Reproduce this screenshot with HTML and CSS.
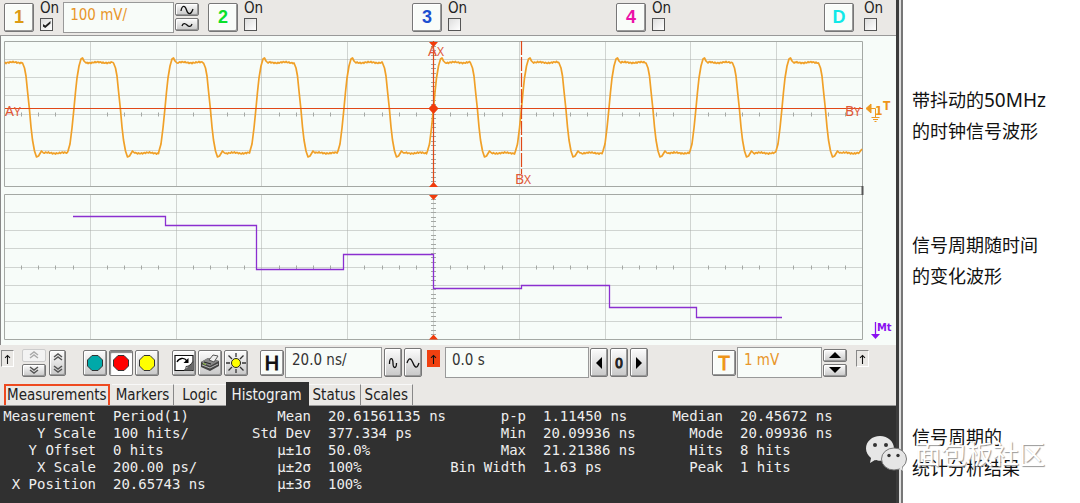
FILE: index.html
```html
<!DOCTYPE html>
<html lang="zh-CN">
<head>
<meta charset="utf-8">
<title>Oscilloscope</title>
<link rel="stylesheet" href="styles.css">
</head>
<body>
<div class="page">
<main class="scope">
  <div class="channels">
    <div class="channel">
      <button class="key key-ch ch1">1</button>
      <label class="on">On<input type="checkbox" checked></label>
      <input class="field field-scale" type="text" value="100 mV/" aria-label="Channel 1 scale">
      <div class="stack">
        <button class="key key-flat" aria-label="Larger scale"><svg width="16" height="10" viewBox="0 0 16 10"><path class="ink" d="M2 6C3 0 6 0 7.500 5S12 10 14 4"/></svg></button>
        <button class="key key-flat" aria-label="Smaller scale"><svg width="16" height="10" viewBox="0 0 16 10"><path class="ink" d="M3 6C4 3 6 3 8 5S12 7 13 4"/></svg></button>
      </div>
    </div>
    <div class="channel">
      <button class="key key-ch ch2">2</button>
      <label class="on">On<input type="checkbox"></label>
    </div>
    <div class="channel">
      <button class="key key-ch ch3">3</button>
      <label class="on">On<input type="checkbox"></label>
    </div>
    <div class="channel">
      <button class="key key-ch ch4">4</button>
      <label class="on">On<input type="checkbox"></label>
    </div>
    <div class="channel channel-digital">
      <button class="key key-ch chd">D</button>
      <label class="on">On<input type="checkbox"></label>
    </div>
  </div>

  <svg class="plot" viewBox="1 36 895 309" role="img" aria-label="Waveforms">
    <g id="grid"></g>
    <path d="M862.500 186v9" stroke="#555" stroke-width="2"/>
    <path id="clock" class="trace-clock"/>
    <path class="trace-period" d="M73 216.500H165.500V225.500H256.500V269.500H343.500V254.500H433.500V288.500H521.500V285.500H609.500V307.500H696.500V317.500H782"/>
    <g class="cursor">
      <path d="M5 108.500H863M433.500 41V187"/>
      <path d="M521.500 41V174" stroke-dasharray="14 2"/>
      <path class="fill" d="M429 42h9l-4.500 5zM429 187h9l-4.500-5zM429 195h9l-4.500 5zM429 339.500h9l-4.500-5zM433.500 103l5 5.500-5 5.500-5-5.500z"/>
      <text x="428" y="56">A<tspan class="sub">X</tspan></text>
      <text x="515" y="184">B<tspan class="sub">X</tspan></text>
      <text x="5" y="116">A<tspan class="sub">Y</tspan></text>
      <text x="845" y="116">B<tspan class="sub">Y</tspan></text>
    </g>
    <g class="ground">
      <path class="fill" d="M866 108.500l5-4.500v9z"/>
      <path d="M870 108.500H875.500V117M871.500 117.500h8M873 119.500h5M874.500 121.500h2"/>
      <text x="875" y="115">1</text>
      <text x="883" y="110">T</text>
    </g>
    <g class="math">
      <path d="M875.500 322V335"/>
      <path class="fill" d="M871 334h9l-4.500 5z"/>
      <text x="877" y="331">Mt</text>
    </g>
  </svg>

  <div class="controls">
    <span class="edge" aria-label="Rising edge"><svg width="11" height="15" viewBox="0 0 11 15"><path class="ink" d="M5.500 13V2.500M2.500 5.500l3-3 3 3"/></svg></span>
    <div class="stack">
      <button class="key key-flat key-off" aria-label="Up"><svg width="12" height="10" viewBox="0 0 12 10"><path class="soft" d="M2 5l4-3 4 3M2 8l4-3 4 3"/></svg></button>
      <button class="key key-flat" aria-label="Down"><svg width="12" height="10" viewBox="0 0 12 10"><path class="soft dark" d="M2 2l4 3 4-3M2 5l4 3 4-3"/></svg></button>
    </div>
    <button class="key key-tall" aria-label="Move"><svg width="12" height="22" viewBox="0 0 12 22"><path class="soft dark" d="M2 5l4-3 4 3M2 8l4-3 4 3M2 14l4 3 4-3M2 17l4 3 4-3"/></svg></button>

    <div class="group group-run">
      <button class="key key-icon" aria-label="Run"><svg width="18" height="18" viewBox="0 0 18 18"><path class="oct" fill="#00a9a9" d="M6 1.500h6l4.500 4.500v6L12 16.500H6L1.500 12V6z"/></svg></button>
      <button class="key key-icon key-down" aria-label="Stop"><svg width="18" height="18" viewBox="0 0 18 18"><path class="oct" fill="#f00" d="M6 1.500h6l4.500 4.500v6L12 16.500H6L1.500 12V6z"/></svg></button>
      <button class="key key-icon" aria-label="Single"><svg width="18" height="18" viewBox="0 0 18 18"><path class="oct" fill="#ff0" d="M6 1.500h6l4.500 4.500v6L12 16.500H6L1.500 12V6z"/></svg></button>
    </div>
    <div class="group group-tools">
      <button class="key key-icon" aria-label="Clear display"><svg width="20" height="20" viewBox="0 0 20 20"><path d="M1 2.500h18v15H1z" fill="#fff" stroke="#111" stroke-width="1.200"/><path d="M18.500 9v8.500H10z" fill="#666"/><path d="M10 17.500c2-1 2-3 2-4 3 0 5-2 7-5" fill="#fff" stroke="#333"/><path d="M3 9c2-4 7-5 10-1" fill="none" stroke="#000" stroke-width="1.300"/><path d="M14.500 5v5H9.500z"/></svg></button>
      <button class="key key-icon" aria-label="Print"><svg width="20" height="20" viewBox="0 0 20 20"><path d="M1 9l7-4 11 3v5l-9 5-9-4z" fill="#444"/><path d="M1 9l7-4 11 3-9 5z" fill="#888"/><path d="M9 7l4-5 5 1-4 6z" fill="#eee" stroke="#555"/><path d="M2 12l8 3 8-4" fill="none" stroke="#bbb"/><path d="M4 9l7 2" stroke="#222"/><path d="M3 10.500l3 1" stroke="#9c4"/></svg></button>
      <button class="key key-icon" aria-label="Brightness"><svg width="20" height="20" viewBox="0 0 20 20"><path d="M10 0v4M10 16v4M0 10h4M16 10h4M2.500 2.500l3.500 3.500M14 14l3.500 3.500M17.500 2.500L14 6M6 14l-3.500 3.500" stroke="#333" stroke-width="1.300"/><circle cx="10" cy="10" r="4.500" fill="#ff0" stroke="#222"/></svg></button>
    </div>

    <button class="key key-icon key-letter key-h">H</button>
    <input class="field field-time" type="text" value="20.0 ns/" aria-label="Time scale">
    <div class="group group-tight">
      <button class="key key-slim" aria-label="Zoom in time"><svg width="10" height="16" viewBox="0 0 10 16"><path class="ink" d="M1.500 9C1.500 2 5 2 5 8s3.500 6 3.500 0"/></svg></button>
      <button class="key key-slim" aria-label="Zoom out time"><svg width="14" height="16" viewBox="0 0 14 16"><path class="ink" d="M1 8C3 2 5 3 7 8s4 6 6 0"/></svg></button>
    </div>
    <span class="edge edge-hot" aria-label="Trigger position"><svg width="11" height="15" viewBox="0 0 11 15"><path class="ink" d="M5.500 13V2.500M2.500 5.500l3-3 3 3"/></svg></span>
    <input class="field field-pos" type="text" value="0.0 s" aria-label="Horizontal position">
    <div class="group group-tight group-nudge">
      <button class="key key-slim" aria-label="Left"><svg width="8" height="12" viewBox="0 0 8 12"><path d="M7 0v12L1 6z"/></svg></button>
      <button class="key key-slim key-zero">0</button>
      <button class="key key-slim" aria-label="Right"><svg width="8" height="12" viewBox="0 0 8 12"><path d="M1 0v12l6-6z"/></svg></button>
    </div>

    <button class="key key-icon key-letter key-t">T</button>
    <input class="field field-level" type="text" value="1 mV" aria-label="Trigger level">
    <div class="stack stack-level">
      <button class="key key-flat" aria-label="Level up"><svg width="12" height="8" viewBox="0 0 12 8"><path d="M0 7h12L6 1z"/></svg></button>
      <button class="key key-flat" aria-label="Level down"><svg width="12" height="8" viewBox="0 0 12 8"><path d="M0 1h12L6 7z"/></svg></button>
    </div>
    <span class="edge edge-last" aria-label="Rising edge"><svg width="11" height="15" viewBox="0 0 11 15"><path class="ink" d="M5.500 13V2.500M2.500 5.500l3-3 3 3"/></svg></span>
  </div>

  <div class="tabs" role="tablist">
    <button class="tab tab-marked" role="tab">Measurements</button>
    <button class="tab" role="tab">Markers</button>
    <button class="tab tab-wide" role="tab">Logic</button>
    <button class="tab tab-active" role="tab" aria-selected="true">Histogram</button>
    <button class="tab" role="tab">Status</button>
    <button class="tab" role="tab">Scales</button>
  </div>

  <div class="readout">
    <table>
      <colgroup><col class="c1"><col class="c2"><col class="c3"><col class="c4"><col class="c5"><col class="c5"><col class="c6"><col></colgroup>
      <tr><th>Measurement</th><td>Period(1)</td><th>Mean</th><td>20.61561135 ns</td><th>p-p</th><td>1.11450 ns</td><th>Median</th><td>20.45672 ns</td></tr>
      <tr><th>Y Scale</th><td>100 hits/</td><th>Std Dev</th><td>377.334 ps</td><th>Min</th><td>20.09936 ns</td><th>Mode</th><td>20.09936 ns</td></tr>
      <tr><th>Y Offset</th><td>0 hits</td><th>μ±1σ</th><td>50.0%</td><th>Max</th><td>21.21386 ns</td><th>Hits</th><td>8 hits</td></tr>
      <tr><th>X Scale</th><td>200.00 ps/</td><th>μ±2σ</th><td>100%</td><th>Bin Width</th><td>1.63 ps</td><th>Peak</th><td>1 hits</td></tr>
      <tr><th>X Position</th><td>20.65743 ns</td><th>μ±3σ</th><td>100%</td><th></th><td></td><th></th><td></td></tr>
    </table>
  </div>
</main>

<aside class="notes">
  <p class="note note-clock">带抖动的<span class="latin">50MHz</span><br>的时钟信号波形</p>
  <p class="note note-period">信号周期随时间<br>的变化波形</p>
  <p class="note note-stats">信号周期的<br>统计分析结果</p>
</aside>

<div class="watermark">
  <svg width="42" height="38" viewBox="0 0 42 38" aria-hidden="true">
    <path d="M15 1C7 1 1 6.500 1 13.500c0 4 2 7 5 9.500l-1 5 5-3c2 .6 3.500.8 5 .8 8 0 14-5.500 14-12.300S23 1 15 1z" fill="#e6e6e6"/>
    <ellipse cx="29" cy="24" rx="12.500" ry="11" fill="#e6e6e6" stroke="#777" stroke-width="1"/>
    <path d="M34 33l4 3-1-5z" fill="#e6e6e6"/>
    <circle cx="10" cy="10" r="2" fill="#333"/><circle cx="21" cy="10" r="2" fill="#333"/>
    <circle cx="24" cy="20.500" r="1.700" fill="#333"/><circle cx="33" cy="20.500" r="1.700" fill="#333"/>
  </svg>
  <span>面包板社区</span>
</div>
</div>
<script src="plot.js"></script>
</body>
</html>
```
FILE: styles.css
```css
* { box-sizing: border-box; }
body { margin: 0; background: #fff; color: #222; font-family: "DejaVu Sans Condensed", "Noto Sans CJK SC", sans-serif; font-size: 15px; }
button, input { font: inherit; color: inherit; margin: 0; }
svg { display: block; }
.page { position: relative; display: grid; grid-template-columns: 899fr 179fr; column-gap: 2px; min-height: 100vh; background: #dedede; }
.scope { display: flex; flex-direction: column; min-width: 0; background: #eae8e5; border-right: 3px solid #3c3c3c; }

.channels { display: grid; grid-template-columns: 204fr 204fr 204fr 208fr 72fr; padding: 1px 0 3px 4px; border-bottom: 1px solid #999; height: 36px; }
.channel { display: flex; align-items: flex-start; gap: 6px; }
.channel-digital { gap: 10px; }
.on { display: flex; flex-direction: column; line-height: 15px; gap: 2px; font-size: 15px; }
.on input { appearance: none; width: 13px; height: 13px; border: 1px solid #555; background: linear-gradient(135deg, #ddd, #fff); display: grid; place-items: center; }
.on input:checked::after { content: ""; width: 8px; height: 7px; background: #222; clip-path: polygon(0 40%, 35% 65%, 100% 0, 100% 35%, 35% 100%, 0 75%); }

.key { display: flex; align-items: center; justify-content: center; flex: none; padding: 0; border: 1px solid #777; border-radius: 2px; background: linear-gradient(#fcfcfc, #c8c8c8); box-shadow: inset -1px -1px 0 #999, inset 1px 1px 0 #fff; }
.key-ch { width: 30px; height: 29px; margin-top: 2px; background: #f9fcf9; font: bold 18px "Liberation Sans", sans-serif; }
.ch1 { color: #dc9a14; }
.ch2 { color: #0ae02a; }
.ch3 { color: #1c4fd0; }
.ch4 { color: #ec10a8; }
.chd { color: #10e8e8; }
.stack { display: flex; flex-direction: column; gap: 2px; flex: none; }
.channel .stack { margin: 2px 0 0 -5px; }
.key-flat { width: 24px; height: 13px; }
.key-off { border-color: #ccc; background: #f3f3f3; box-shadow: none; }
.key-tall { width: 17px; height: 26px; margin-left: 3px; }
.key-icon { width: 24px; height: 26px; }
.key-down { background: #fff; box-shadow: inset 1px 2px 1px #888; }
.key-slim { width: 18px; height: 29px; }
.key-zero { font: 14px "DejaVu Sans Condensed", sans-serif; -webkit-text-stroke: 1px #222; }
.key-letter { background: #f9fcf9; font: 20px "Noto Sans", sans-serif; line-height: 22px; }
.key-h { margin-left: 12px; color: #111; -webkit-text-stroke: 1px #111; }
.key-t { margin-left: auto; color: #ee9418; -webkit-text-stroke: 1px #ee9418; }
.ink { fill: none; stroke: #111; stroke-width: 1.300; }
.soft { fill: none; stroke: #aaa; stroke-width: 1.500; }
.dark { stroke: #555; }
.oct { stroke: #333; stroke-width: 1; }

.field { min-width: 0; height: 31px; padding: 0 6px 5px; border: 1px solid #999; background: #f8fcf9; color: #333; font-size: 15px; }
.field-scale { width: 111px; margin-left: -2px; margin-top: 1px; color: #e8962a; }

.plot { width: 100%; height: auto; background: #f7fcf9; border-left: 1px solid #888; }
.frame { fill: none; stroke: #a4a8a4; }
.minor { fill: none; stroke: #a8aca8; stroke-dasharray: 1 1; }
.tick { fill: none; stroke: #a4a8a4; }
.trace-clock { fill: none; stroke: #f0a028; stroke-width: 1.700; stroke-linejoin: round; }
.trace-period { fill: none; stroke: #8b2fd0; stroke-width: 1.300; }
.cursor path { fill: none; stroke: #e04818; stroke-width: 1.200; }
.cursor .fill { fill: #f03c0c; stroke: none; }
.cursor text { fill: #e05838; font: 14px "Noto Sans", sans-serif; }
.cursor .sub { font-size: 12px; }
.ground path { fill: none; stroke: #ee9a20; }
.ground .fill { fill: #ee9a20; }
.ground text { fill: #ee9418; font: bold 12px "DejaVu Sans Condensed", sans-serif; }
.math path { stroke: #8a10f0; stroke-width: 1.300; }
.math .fill { fill: #8a10f0; stroke: none; }
.math text { fill: #8a10f0; font: bold 11px "DejaVu Sans Condensed", sans-serif; }

.controls { display: flex; align-items: center; height: 37px; padding: 0 27px 2px 1px; }
.edge { display: flex; flex: none; align-self: flex-start; margin-top: 5px; padding: 1px; border: 1px solid #888; border-right-color: #fff; border-bottom-color: #fff; width: 13px; height: 17px; justify-content: center; overflow: hidden; }
.controls > .edge:first-child { margin-right: 8px; }
.controls .edge-hot { margin-left: 5px; margin-right: 5px; background: #f04010; border-color: #f04010; }
.edge-last { margin-left: 9px; }
.group { display: flex; flex: none; gap: 2px; }
.group-run { margin-left: 17px; }
.group-tools { margin-left: 13px; }
.group-tight { margin-left: 2px; }
.group-nudge { margin-left: 1px; }
.field-time { width: 97px; margin-left: 1px; }
.field-pos { width: 144px; }
.field-level { width: 85px; margin-left: 1px; color: #e8962a; }
.stack-level { margin-left: 1px; }

.tabs { display: flex; align-items: stretch; height: 24px; padding-left: 4px; border-bottom: 1px solid #999; }
.tab { flex: none; margin-top: 2px; padding: 0 4px; border: 0; border-right: 1px solid #888; border-top: 1px solid #f8f8f8; background: none; line-height: 20px; white-space: nowrap; }
.tab-marked { border: 2px solid #ee4a20; border-bottom: 0; padding: 0 1px; margin-right: 2px; line-height: 19px; }
.tab-wide { padding: 0 8px; border-right: 0; }
.tab-active { margin-top: 0; margin-bottom: -1px; padding: 0 6px; background: #303030; border-color: #303030; color: #f2f2f2; line-height: 24px; }

.readout { flex: 1; padding: 2px 0 8px; background: #303030; color: #eee; }
.readout table { width: 100%; table-layout: fixed; border-collapse: collapse; font: 14px/17px "DejaVu Sans Mono", monospace; }
.readout th, .readout td { padding: 0; height: 17px; font-weight: normal; text-align: left; white-space: nowrap; }
.readout th { padding-right: 17px; text-align: right; }
.c1 { width: 113px; }
.c2 { width: 115px; }
.c3 { width: 100px; }
.c4 { width: 110px; }
.c5 { width: 105px; }
.c6 { width: 92px; }

.notes { display: flex; flex-direction: column; padding: 84px 0 0 9px; background: #fff; border-left: 2px solid #777; color: #111; }
.note { margin: 0; font: 18px/31px "Noto Sans CJK SC", sans-serif; white-space: nowrap; }
.note-period { margin-top: 83px; }
.note-stats { margin-top: 130px; }
.latin { font-family: "Noto Sans", sans-serif; font-size: 19px; line-height: 1; }

.watermark { position: absolute; right: 35px; bottom: 30px; display: flex; align-items: center; gap: 8px; color: #fff; font: 26px/30px "Noto Sans CJK SC", sans-serif; text-shadow: 1px 1px 1px #999; white-space: nowrap; }
.watermark span { margin-top: -3px; }
```
FILE: plot.js
```javascript
(function () {
  var parts = [];
  function line(cls, d) { parts.push('<path class="' + cls + '" d="' + d + '"/>'); }

  [41.5, 194.5].forEach(function (top) {
    var left = 4.5, width = 858, height = 145, i, x, y;
    for (i = 1; i < 10; i++) {
      x = Math.floor(left + width * i / 10) + 0.5;
      line('minor', 'M' + x + ' ' + top + 'v' + height);
    }
    for (i = 1; i < 8; i++) {
      y = Math.floor(top + height * i / 8) + 0.5;
      line('minor', 'M' + left + ' ' + y + 'h' + width);
    }
    y = Math.floor(top + height / 2) + 0.5;
    for (i = 1; i < 50; i++) {
      if (i % 5) {
        x = Math.floor(left + width * i / 50) + 0.5;
        line('tick', 'M' + x + ' ' + (y - 2) + 'v4');
      }
    }
    for (i = 1; i < 32; i++) {
      y = Math.floor(top + height * i / 32) + 0.5;
      line('tick', 'M431 ' + y + 'h5');
    }
    line('frame', 'M' + left + ' ' + top + 'h' + width + 'v' + height + 'h-' + width + 'z');
  });
  document.getElementById('grid').innerHTML = parts.join('');

  var falls = [29.5, 120.5, 210.5, 301, 389.5, 477.5, 566, 653, 739.5, 825.5];
  var rises = [74, 165, 256, 344, 433.5, 521.5, 609, 696, 782];
  var fall = [[-7, 63], [-5, 68], [-3.5, 76], [-2, 91], [0, 110], [1.5, 127], [3, 140], [5, 151], [7, 157], [9, 156], [12, 151], [14, 153]];
  var rise = [[-6, 151], [-4, 144], [-2, 128], [0, 108], [1.5, 92], [3, 78], [5, 66], [7, 59], [8.5, 58], [10, 61], [12, 63]];
  var points = [[5, 62]];

  function flat(to, level) {
    var x = points[points.length - 1][0] + 1;
    for (; x < to; x += 1) {
      points.push([x, level + Math.sin(x * 2.3) * 0.6 + Math.sin(x * 0.37) * 0.5]);
    }
  }
  function edge(shape, at) {
    shape.forEach(function (p) { points.push([at + p[0], p[1]]); });
  }

  falls.forEach(function (at, i) {
    flat(at - 7, 62.5);
    edge(fall, at);
    if (i < rises.length) {
      flat(rises[i] - 6, 153);
      edge(rise, rises[i]);
    }
  });
  flat(860, 153);
  points.push([862, 149]);
  document.getElementById('clock').setAttribute('d', 'M' + points.map(function (p) {
    return p[0].toFixed(1) + ' ' + p[1].toFixed(1);
  }).join('L'));
})();
```
